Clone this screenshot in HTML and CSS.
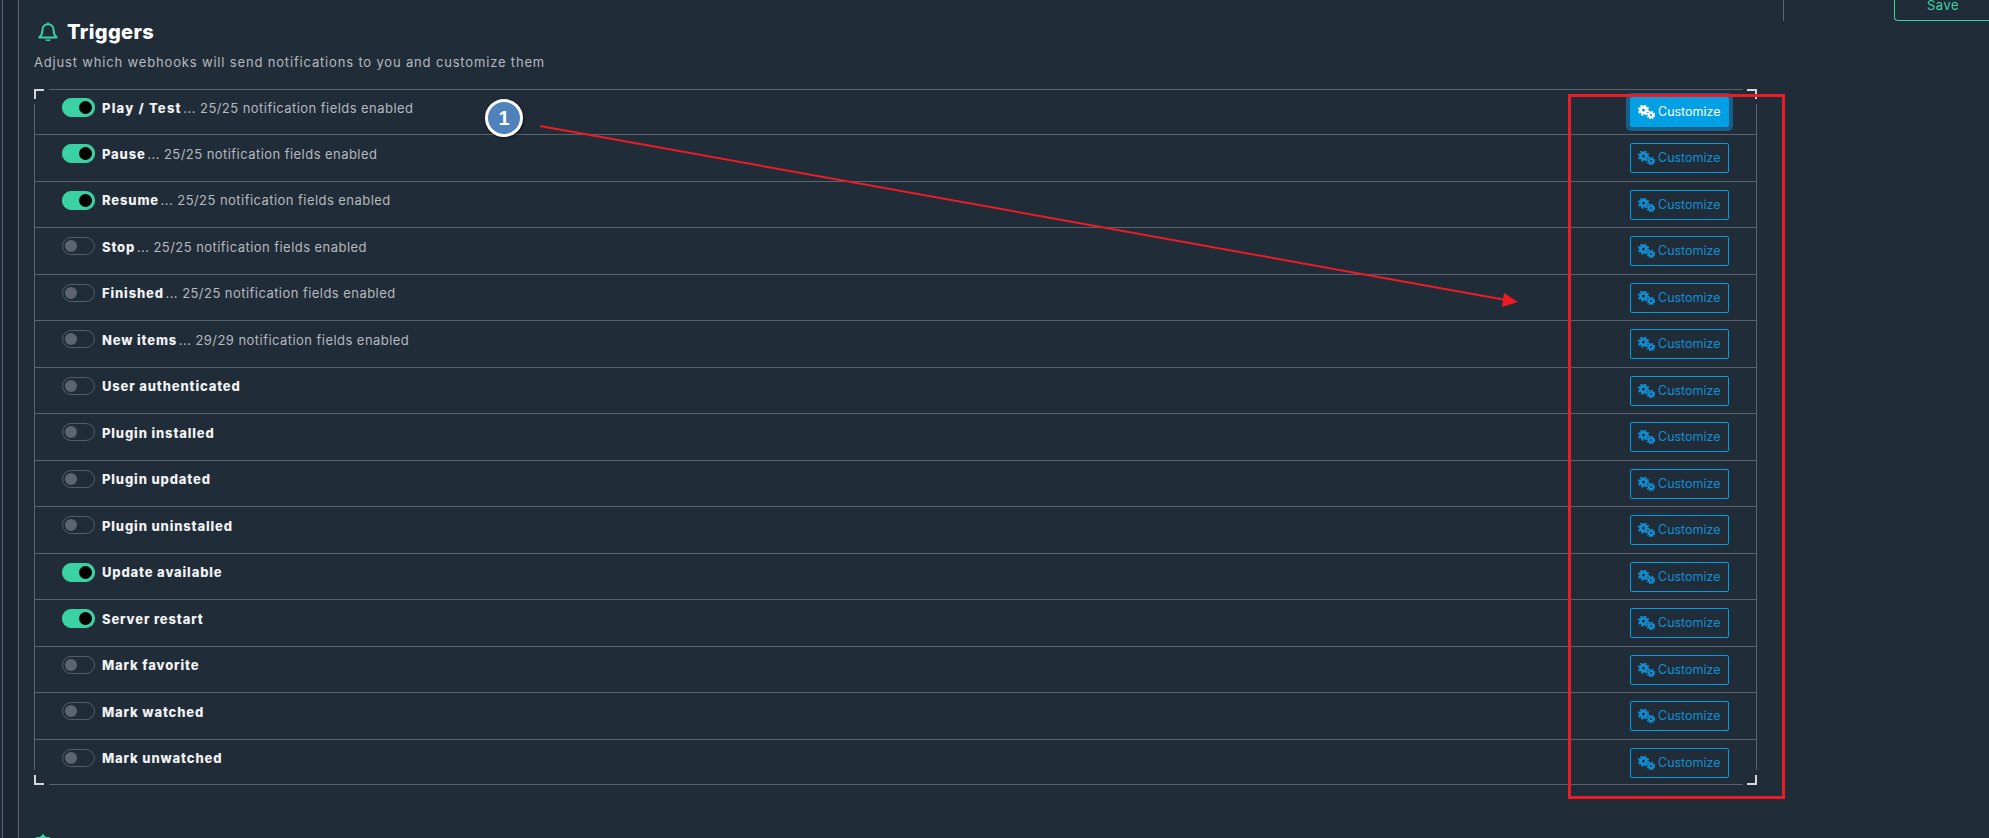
FILE: index.html
```html
<!DOCTYPE html>
<html>
<head>
<title>Triggers</title>
<link rel="stylesheet" href="styles.css">
</head>
<body>
<svg class="defs" width="0" height="0">
  <symbol id="cogs" viewBox="0 0 17 14">
    <circle cx="5.500" cy="5" r="2.900" fill="none" stroke="currentColor" stroke-width="2.800"/>
    <circle cx="5.500" cy="5" r="4.800" fill="none" stroke="currentColor" stroke-width="1.800" stroke-dasharray="2.150 1.620"/>
    <circle cx="13" cy="10" r="2.100" fill="none" stroke="currentColor" stroke-width="2"/>
    <circle cx="13" cy="10" r="3.500" fill="none" stroke="currentColor" stroke-width="1.500" stroke-dasharray="1.700 1.050"/>
  </symbol>
</svg>

<div class="page">
  <div class="rail"></div>
  <div class="main">

    <div class="topbar">
      <div class="divider"></div>
      <a class="save">Save</a>
    </div>

    <h2 class="title">
      <svg class="bell" viewBox="0 0 20 22" width="20" height="22">
        <path d="M10 3.200c-3.500 0-5.600 2.600-5.600 6 0 4.200-1.400 5.800-3 7.200h17.200c-1.600-1.400-3-3-3-7.200 0-3.400-2.100-6-5.600-6z" fill="none" stroke="#3ad1a3" stroke-width="2" stroke-linejoin="round"/>
        <path d="M8.700 2.500a1.300 1.300 0 0 1 2.600 0zM7 18.500h6c-.6 2-5.400 2-6 0z" fill="#3ad1a3"/>
      </svg>
      Triggers
    </h2>
    <p class="hint">Adjust which webhooks will send notifications to you and customize them</p>

    <div class="frame">
      <div class="row"><span class="toggle on"></span><b class="wide">Play / Test</b><span class="note"> ... 25/25 notification fields enabled</span><a class="btn active"><svg class="cog"><use href="#cogs"/></svg>Customize</a></div>
      <div class="row"><span class="toggle on"></span><b>Pause</b><span class="note"> ... 25/25 notification fields enabled</span><a class="btn"><svg class="cog"><use href="#cogs"/></svg>Customize</a></div>
      <div class="row"><span class="toggle on"></span><b>Resume</b><span class="note"> ... 25/25 notification fields enabled</span><a class="btn"><svg class="cog"><use href="#cogs"/></svg>Customize</a></div>
      <div class="row"><span class="toggle"></span><b>Stop</b><span class="note"> ... 25/25 notification fields enabled</span><a class="btn"><svg class="cog"><use href="#cogs"/></svg>Customize</a></div>
      <div class="row"><span class="toggle"></span><b>Finished</b><span class="note"> ... 25/25 notification fields enabled</span><a class="btn"><svg class="cog"><use href="#cogs"/></svg>Customize</a></div>
      <div class="row"><span class="toggle"></span><b>New items</b><span class="note"> ... 29/29 notification fields enabled</span><a class="btn"><svg class="cog"><use href="#cogs"/></svg>Customize</a></div>
      <div class="row"><span class="toggle"></span><b>User authenticated</b><a class="btn"><svg class="cog"><use href="#cogs"/></svg>Customize</a></div>
      <div class="row"><span class="toggle"></span><b>Plugin installed</b><a class="btn"><svg class="cog"><use href="#cogs"/></svg>Customize</a></div>
      <div class="row"><span class="toggle"></span><b>Plugin updated</b><a class="btn"><svg class="cog"><use href="#cogs"/></svg>Customize</a></div>
      <div class="row"><span class="toggle"></span><b>Plugin uninstalled</b><a class="btn"><svg class="cog"><use href="#cogs"/></svg>Customize</a></div>
      <div class="row"><span class="toggle on"></span><b>Update available</b><a class="btn"><svg class="cog"><use href="#cogs"/></svg>Customize</a></div>
      <div class="row"><span class="toggle on"></span><b>Server restart</b><a class="btn"><svg class="cog"><use href="#cogs"/></svg>Customize</a></div>
      <div class="row"><span class="toggle"></span><b>Mark favorite</b><a class="btn"><svg class="cog"><use href="#cogs"/></svg>Customize</a></div>
      <div class="row"><span class="toggle"></span><b>Mark watched</b><a class="btn"><svg class="cog"><use href="#cogs"/></svg>Customize</a></div>
      <div class="row"><span class="toggle"></span><b>Mark unwatched</b><a class="btn"><svg class="cog"><use href="#cogs"/></svg>Customize</a></div>
    </div>

    <svg class="next-icon" viewBox="0 0 14 6" width="14" height="6"><path d="M7 0l3 3h4v3H0V3h4z" fill="#3ad1a3"/></svg>
  </div>
</div>

<!-- annotations drawn on top of the screenshot -->
<div class="callout-box"></div>
<svg class="callout-arrow" width="1989" height="838" viewBox="0 0 1989 838">
  <path d="M540 126L1506 300" stroke="#ed1c24" stroke-width="2" fill="none"/>
  <path d="M1518 302L1504 293L1502 307z" fill="#ed1c24"/>
</svg>
<div class="badge">1</div>
</body>
</html>
```

FILE: styles.css
```css
html, body { margin: 0; padding: 0; height: 100%; overflow: hidden; }
body { background: #212c39; color: #fff; font-family: Inter, "Liberation Sans", sans-serif; position: relative; }
.defs { position: absolute; }

.page { display: flex; height: 838px; overflow: hidden; }
.rail { width: 15px; margin-left: 2px; background: #1c2631; border-left: 1px solid #5a6470; border-right: 1px solid #5a6470; flex: none; }
.main { flex: 1; padding-left: 15px; min-width: 0; }

/* top bar, scrolled most of the way off */
.topbar { height: 21px; display: flex; justify-content: flex-end; }
.divider { width: 1px; background: #5a6470; margin-right: 110px; }
.save { width: 95px; height: 30px; margin-top: -9px; border: 1px solid #3ad1a3; border-right: 0; border-radius: 0 0 0 4px; border-top: 0; color: #3ad1a3; font-size: 13px; letter-spacing: .5px; text-align: center; line-height: 28px; padding-left: 2px; box-sizing: border-box; }

.title { display: flex; align-items: center; gap: 9px; margin: 0 0 0 4px; height: 22px; font-size: 20px; font-weight: 800; letter-spacing: .4px; }
.hint { margin: 12px 0 0; height: 15px; font-size: 13px; line-height: 15px; color: #b4b9bf; letter-spacing: .83px; white-space: nowrap; }

.frame {
  width: 1723px;
  height: 696px;
  margin-top: 19px;
  box-sizing: border-box;
  background:
    linear-gradient(#d4d6d9, #d4d6d9) 0 0 / 10px 2px no-repeat,
    linear-gradient(#d4d6d9, #d4d6d9) 0 0 / 2px 10px no-repeat,
    linear-gradient(#d4d6d9, #d4d6d9) 100% 0 / 10px 2px no-repeat,
    linear-gradient(#d4d6d9, #d4d6d9) 100% 0 / 2px 10px no-repeat,
    linear-gradient(#d4d6d9, #d4d6d9) 0 100% / 10px 2px no-repeat,
    linear-gradient(#d4d6d9, #d4d6d9) 0 100% / 2px 10px no-repeat,
    linear-gradient(#d4d6d9, #d4d6d9) 100% 100% / 10px 2px no-repeat,
    linear-gradient(#d4d6d9, #d4d6d9) 100% 100% / 2px 10px no-repeat,
    linear-gradient(#5a6470, #5a6470) 15px 0 / 1694px 1px no-repeat,
    linear-gradient(#5a6470, #5a6470) 15px 100% / 1694px 1px no-repeat,
    linear-gradient(#5a6470, #5a6470) 0 15px / 1px 666px no-repeat,
    linear-gradient(#5a6470, #5a6470) 100% 15px / 1px 666px no-repeat;
}

.row { display: flex; align-items: flex-start; height: 46.5px; box-sizing: border-box; border-top: 1px solid #5a6470; padding: 8px 28px 0 28px; font-size: 13px; line-height: 18px; }
.row:first-child { height: 45px; border-top: 0; }
.row b { margin-left: 7px; margin-top: 1.5px; font-weight: 800; color: #f2f3f4; letter-spacing: .85px; }
.row b.wide { letter-spacing: 1.2px; }
.note { margin-top: 1.5px; margin-left: -2.5px; color: #b4b9bf; letter-spacing: .45px; white-space: pre; }

.toggle { width: 33px; height: 18px; margin-top: 1px; box-sizing: border-box; border: 1px solid #545e6b; border-radius: 9px; padding: 2px 0 0 2px; flex: none; }
.toggle::after { content: ""; display: block; width: 12px; height: 12px; border-radius: 50%; background: #5b6470; }
.toggle.on { height: 19px; background: #3ad1a3; border-color: #3ad1a3; padding: 2px 0 0 16px; }
.toggle.on::after { width: 13px; height: 13px; background: #000; }

.btn { margin-left: auto; width: 99px; height: 30px; box-sizing: border-box; border: 1px solid #019fe4; border-radius: 2px; display: flex; align-items: center; padding-left: 7px; gap: 3px; color: #0f8fd3; font-size: 12.5px; letter-spacing: 0; flex: none; }
.btn.active { background: #019fe4; color: #fff; box-shadow: 0 0 0 4px #185f8c; }
.cog { width: 17px; height: 14px; flex: none; }

.next-icon { display: block; margin: 49px 0 0 2px; }

/* annotations */
.callout-box { position: absolute; left: 1568px; top: 94px; width: 217px; height: 705px; box-sizing: border-box; border: 3px solid #ed1c24; }
.callout-arrow { position: absolute; left: 0; top: 0; }
.badge { position: absolute; left: 485px; top: 99px; width: 38px; height: 38px; box-sizing: border-box; border: 3px solid #fff; border-radius: 50%; background: #4f81bd; color: #fff; font: 700 20px/32px "Liberation Sans", sans-serif; text-align: center; box-shadow: 1px 1px 3px rgba(0,0,0,.6); }
```
